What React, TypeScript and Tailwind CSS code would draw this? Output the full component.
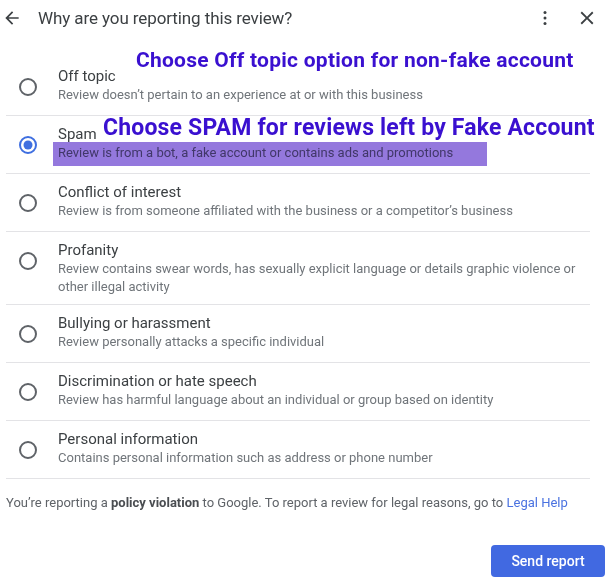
import React from "react";

const rows = [
  { title: "Off topic", desc: "Review doesn’t pertain to an experience at or with this business" },
  { title: "Spam", desc: "Review is from a bot, a fake account or contains ads and promotions", selected: true },
  { title: "Conflict of interest", desc: "Review is from someone affiliated with the business or a competitor’s business" },
  { title: "Profanity", desc: "Review contains swear words, has sexually explicit language or details graphic violence or other illegal activity", multi: true },
  { title: "Bullying or harassment", desc: "Review personally attacks a specific individual" },
  { title: "Discrimination or hate speech", desc: "Review has harmful language about an individual or group based on identity" },
  { title: "Personal information", desc: "Contains personal information such as address or phone number" },
];

function Radio({ selected }: { selected?: boolean }) {
  return selected ? (
    <svg width="20" height="20" viewBox="0 0 20 20">
      <circle cx="10" cy="10" r="8" fill="none" stroke="#3f6fe0" strokeWidth="2" />
      <circle cx="10" cy="10" r="4.5" fill="#3f6fe0" />
    </svg>
  ) : (
    <svg width="20" height="20" viewBox="0 0 20 20">
      <circle cx="10" cy="10" r="8" fill="none" stroke="#5f6368" strokeWidth="2" />
    </svg>
  );
}

export default function App() {
  return (
    <div className="relative w-[610px] h-[583px] bg-white overflow-hidden" style={{ fontFamily: "Roboto, 'Noto Sans', sans-serif" }}>
      {/* header */}
      <div className="flex items-center h-[36px] pl-[2px] pr-[12px]">
        <svg width="20" height="20" viewBox="0 0 24 24" className="shrink-0">
          <path d="M20 11H7.83l5.59-5.59L12 4l-8 8 8 8 1.41-1.41L7.83 13H20v-2z" fill="#3c4043" />
        </svg>
        <div className="ml-[16px] text-[17px] leading-[20px] text-[#3c4043] tracking-[-0.1px]">Why are you reporting this review?</div>
        <div className="flex-1" />
        <svg width="20" height="20" viewBox="0 0 24 24" className="shrink-0">
          <circle cx="12" cy="5.5" r="1.8" fill="#3c4043" />
          <circle cx="12" cy="12" r="1.8" fill="#3c4043" />
          <circle cx="12" cy="18.5" r="1.8" fill="#3c4043" />
        </svg>
        <svg width="22" height="22" viewBox="0 0 24 24" className="ml-[21px] shrink-0">
          <path d="M19 6.41L17.59 5 12 10.59 6.41 5 5 6.41 10.59 12 5 17.59 6.41 19 12 13.41 17.59 19 19 17.59 13.41 12z" fill="#3c4043" />
        </svg>
      </div>

      <div className="mt-[22px] ml-[6px] w-[584px]">
        {rows.map((r, i) => (
          <div key={i} className={`flex items-start pt-[8px] border-b border-[#e3e3e6] ${r.multi ? "pb-[8px]" : "pb-[11px]"}`}>
            <div className="w-[52px] pl-[12px] pt-[11px] shrink-0 flex">
              <Radio selected={r.selected} />
            </div>
            <div className="flex flex-col">
              <div className="text-[15px] leading-[20px] text-[#3c4043]">{r.title}</div>
              <div className="text-[13px] leading-[18px] text-[#70757a] pr-[8px]">{r.desc}</div>
            </div>
          </div>
        ))}
      </div>

      <div className="mt-[15px] ml-[6px] text-[13px] leading-[18px] text-[#5f6368]">
        You’re reporting a <span className="font-bold text-[#4a4d51]">policy violation</span> to Google. To report a review for legal reasons, go to{" "}
        <span className="text-[#4a72e0]">Legal Help</span>
      </div>

      <div className="flex justify-end pr-[5px] mt-[33px]">
        <button className="w-[114px] h-[32px] rounded-[4px] bg-[#4169e1] text-white text-[14px] font-medium">Send report</button>
      </div>

      {/* annotations */}
      <div className="absolute left-[53px] top-[142px] w-[434px] h-[24px] bg-[#9478dd] mix-blend-multiply" />
      <div className="absolute left-[136px] top-[47px] text-[21px] leading-[27px] font-bold text-[#3a10d0] whitespace-nowrap tracking-[0.25px]">
        Choose Off topic option for non-fake account
      </div>
      <div className="absolute left-[103px] top-[113px] text-[23px] leading-[29px] font-bold text-[#3a10d0] whitespace-nowrap tracking-[0.18px]">
        Choose SPAM for reviews left by Fake Account
      </div>
    </div>
  );
}
